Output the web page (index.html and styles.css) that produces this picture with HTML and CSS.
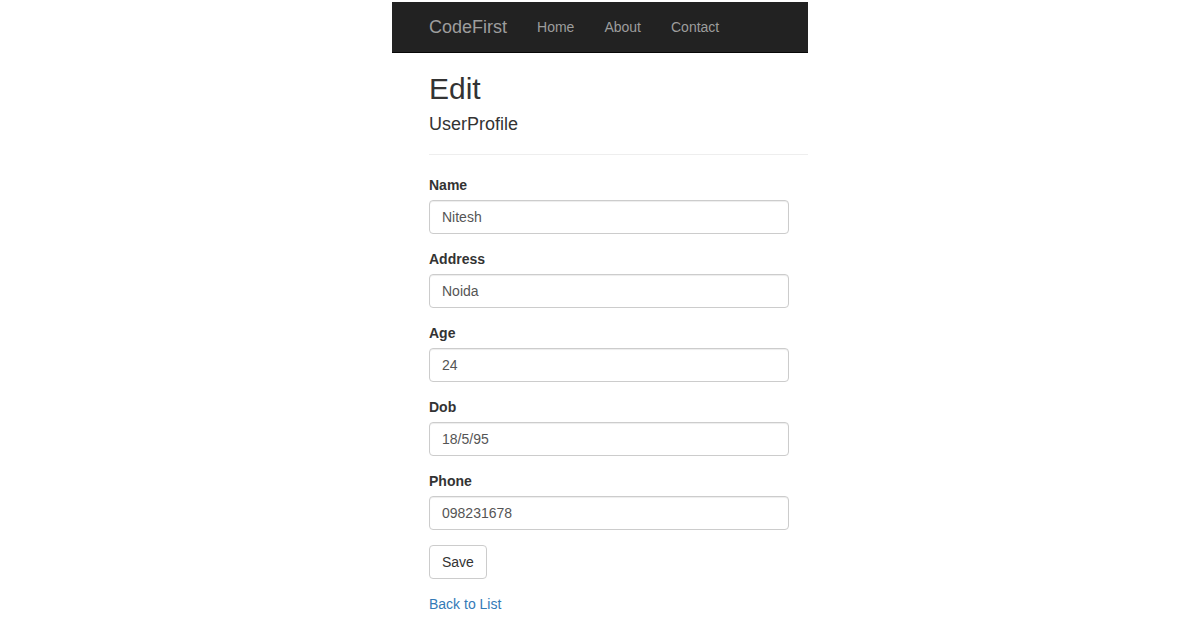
FILE: index.html
```html
<!DOCTYPE html>
<html>
<head>
<meta charset="utf-8">
<title>Edit - CodeFirst</title>
<link rel="stylesheet" href="styles.css">
</head>
<body>
<div class="page">
  <nav class="navbar">
    <a class="brand" href="#">CodeFirst</a>
    <ul class="nav">
      <li><a href="#">Home</a></li>
      <li><a href="#">About</a></li>
      <li><a href="#">Contact</a></li>
    </ul>
  </nav>
  <div class="content">
    <h2 class="title">Edit</h2>
    <h4 class="subtitle">UserProfile</h4>
    <hr class="rule">
    <form class="form">
      <div class="form-group">
        <label class="label">Name</label>
        <input class="input" type="text" value="Nitesh">
      </div>
      <div class="form-group">
        <label class="label">Address</label>
        <input class="input" type="text" value="Noida">
      </div>
      <div class="form-group">
        <label class="label">Age</label>
        <input class="input" type="text" value="24">
      </div>
      <div class="form-group">
        <label class="label">Dob</label>
        <input class="input" type="text" value="18/5/95">
      </div>
      <div class="form-group">
        <label class="label">Phone</label>
        <input class="input" type="text" value="098231678">
      </div>
      <div class="form-group">
        <button class="btn" type="button">Save</button>
      </div>
    </form>
    <div class="back"><a class="link" href="#">Back to List</a></div>
  </div>
</div>
</body>
</html>
```
FILE: styles.css
```css
html, body {
  margin: 0;
  padding: 0;
  background: #fff;
}
body {
  font-family: "Liberation Sans", Arial, Helvetica, sans-serif;
  font-size: 14px;
  line-height: 20px;
  color: #333;
}
.page {
  width: 416px;
  margin: 0 auto;
  padding-top: 2px;
}
.navbar {
  display: flex;
  align-items: center;
  height: 50px;
  background: #222;
  border-bottom: 1px solid #080808;
  padding-left: 22px;
}
.brand {
  display: block;
  padding: 15px;
  font-size: 18px;
  line-height: 20px;
  color: #9d9d9d;
  text-decoration: none;
}
.nav {
  display: flex;
  list-style: none;
  margin: 0;
  padding: 0;
}
.nav a {
  display: block;
  padding: 15px;
  line-height: 20px;
  color: #9d9d9d;
  text-decoration: none;
}
.content {
  padding-left: 37px;
}
.title {
  font-size: 30px;
  font-weight: 500;
  line-height: 1.1;
  margin: 19px 0 10px;
}
.subtitle {
  font-size: 18px;
  font-weight: 500;
  line-height: 1.1;
  margin: 10px 0 10px;
}
.rule {
  border: 0;
  border-top: 1px solid #eee;
  margin: 19px 0 20px;
}
.form {
  margin: 0;
}
.form-group {
  margin-bottom: 15px;
}
.label {
  display: block;
  font-weight: bold;
  margin-bottom: 5px;
}
.input {
  display: block;
  box-sizing: border-box;
  width: 360px;
  height: 34px;
  padding: 6px 12px;
  font-family: inherit;
  font-size: 14px;
  line-height: 20px;
  color: #555;
  background: #fff;
  border: 1px solid #ccc;
  border-radius: 4px;
  box-shadow: inset 0 1px 1px rgba(0,0,0,.075);
  margin: 0;
}
.btn {
  display: inline-block;
  height: 34px;
  padding: 6px 12px;
  font-family: inherit;
  font-size: 14px;
  line-height: 20px;
  color: #333;
  background: #fff;
  border: 1px solid #ccc;
  border-radius: 4px;
  margin: 0;
}
.link {
  color: #337ab7;
  text-decoration: none;
}
```
